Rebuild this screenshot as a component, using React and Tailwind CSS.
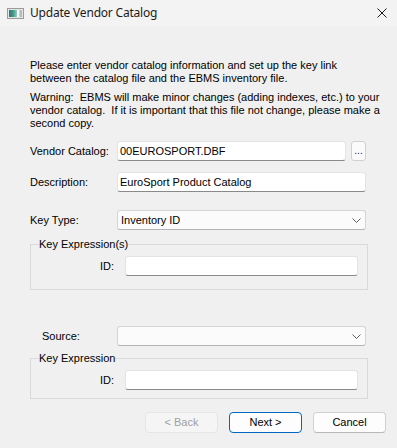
import React from 'react';

// --- small window icon in the title bar ---
const AppIcon = () => (
    <svg width="17" height="11" viewBox="0 0 17 11" className="shrink-0">
        <defs>
            <linearGradient id="pane" x1="0" y1="0" x2="1" y2="0">
                <stop offset="0" stopColor="#3c6b8c" />
                <stop offset="0.5" stopColor="#3f9a7c" />
                <stop offset="1" stopColor="#8fd0c4" />
            </linearGradient>
        </defs>
        <rect x="0.5" y="0.5" width="16" height="10" fill="#e6e6e6" stroke="#9a9a9a" />
        <rect x="2" y="2" width="8" height="7" fill="url(#pane)" />
        <rect x="10" y="2" width="2" height="7" fill="#ffffff" />
        <rect x="12.5" y="2" width="2.5" height="7" fill="#b9b9b9" />
    </svg>
);

const Chevron = () => (
    <svg width="9" height="5" viewBox="0 0 9 5" className="mr-[4px]">
        <path d="M0.5 0.5 L4.5 4.5 L8.5 0.5" fill="none" stroke="#606060" strokeWidth="1" />
    </svg>
);

// --- Win11-ish text box ---
const TextBox = ({ value = '', width }) => (
    <div
        className="h-[20px] bg-white border border-[#e3e3e3] border-b-[#8a8a8a] rounded-[3px] flex items-center pl-[2px] text-black"
        style={{ width }}
    >
        {value}
    </div>
);

const ComboBox = ({ value = '' }) => (
    <div className="w-[249px] h-[20px] bg-[#fbfbfb] border border-[#d5d5d5] border-b-[#b5b5b5] rounded-[3px] flex items-center justify-between pl-[3px] text-black">
        <span>{value}</span>
        <Chevron />
    </div>
);

const Row = ({ label, indent, children }) => (
    <div className="flex items-center">
        <div className={`w-[87px] ${indent ? 'pl-[12px]' : ''}`}>{label}</div>
        {children}
    </div>
);

const Group = ({ title, className, children }) => (
    <fieldset className={`w-[338px] border border-[#d9d9d9] pl-[8px] ${className}`}>
        <legend className="leading-[13px] px-0">{title}</legend>
        {children}
    </fieldset>
);

const IdRow = () => (
    <div className="flex items-center">
        <div className="w-[75px] text-right">ID:</div>
        <div className="ml-[11px]">
            <TextBox width={233} />
        </div>
    </div>
);

const Button = ({ children, variant }) => {
    const styles = {
        disabled: 'bg-[#f5f5f5] border-[#e6e6e6] text-[#a0a0a0]',
        primary: 'bg-[#fdfdfd] border-[#0067c0] text-black',
        normal: 'bg-[#fdfdfd] border-[#d0d0d0] border-b-[#b8b8b8] text-black',
    };
    return (
        <button className={`w-[73px] h-[21px] border rounded-[4px] flex items-center justify-center ${styles[variant]}`}>
            {children}
        </button>
    );
};

export default function App() {
    return (
        <div className="w-[397px] h-[448px] bg-[#f0f0f0] flex flex-col text-[11px] text-black font-['Liberation_Sans',Arial,sans-serif] overflow-hidden">
            {/* title bar */}
            <div className="h-[26px] bg-[#f3f3f3] flex items-center pl-[7px] pr-[10px]">
                <AppIcon />
                <span className="ml-[6px] text-[12px] text-[#1b1b1b] font-['Noto_Sans',sans-serif] tracking-[-0.2px]">Update Vendor Catalog</span>
                <svg width="10" height="10" viewBox="0 0 10 10" className="ml-auto">
                    <path d="M0.5 0.5 L9.5 9.5 M9.5 0.5 L0.5 9.5" stroke="#1b1b1b" strokeWidth="1" />
                </svg>
            </div>

            <div className="pl-[30px] flex flex-col leading-[13px]">
                <p className="mt-[33px]">
                    Please enter vendor catalog information and set up the key link<br />
                    between the catalog file and the EBMS inventory file.
                </p>
                <p className="mt-[6px] whitespace-pre">
                    {'Warning:  EBMS will make minor changes (adding indexes, etc.) to your\nvendor catalog.  If it is important that this file not change, please make a\nsecond copy.'}
                </p>

                <div className="mt-[11px]">
                    <Row label="Vendor Catalog:">
                        <TextBox value="00EUROSPORT.DBF" width={229} />
                        <button className="ml-[5px] w-[15px] h-[20px] bg-[#fbfbfb] border border-[#d0d0d0] rounded-[3px] text-[10px] leading-[10px] flex items-end justify-center pb-[4px] text-[#20206a]">...</button>
                    </Row>
                </div>
                <div className="mt-[11px]">
                    <Row label="Description:">
                        <TextBox value="EuroSport Product Catalog" width={249} />
                    </Row>
                </div>
                <div className="mt-[18px]">
                    <Row label="Key Type:">
                        <ComboBox value="Inventory ID" />
                    </Row>
                </div>

                <Group title="Key Expression(s)" className="mt-[8px] pt-[5px] pb-[13px]">
                    <IdRow />
                </Group>

                <div className="mt-[36px]">
                    <Row label="Source:" indent>
                        <ComboBox />
                    </Row>
                </div>

                <Group title="Key Expression" className="mt-[6px] pt-[5px] pb-[8px]">
                    <IdRow />
                </Group>
            </div>

            <div className="mt-[13px] flex justify-end pr-[11px] gap-[11px]">
                <Button variant="disabled">&lt; Back</Button>
                <Button variant="primary">Next &gt;</Button>
                <Button variant="normal">Cancel</Button>
            </div>
        </div>
    );
}
